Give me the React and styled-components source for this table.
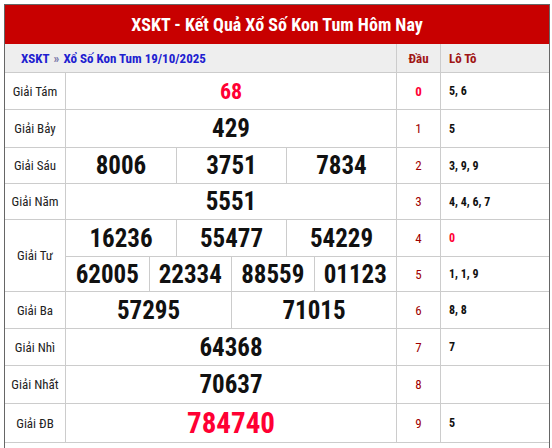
import React from 'react';
import styled, { createGlobalStyle } from "styled-components";

const GlobalStyle = createGlobalStyle`
  body {
    margin: 0;
    background: #fff;
    font-family: Roboto, "Liberation Sans", sans-serif;
  }
`;

const Board = styled.div`
  margin: 4px 0 0 4px;
  width: 546px;
  box-sizing: border-box;
  border: 1px solid #666;
  border-bottom: none;
  font-stretch: 75%;
`;

const Title = styled.h1`
  margin: 0;
  height: 39px;
  background: #c80000;
  color: #fff;
  font-size: 18px;
  font-weight: 700;
  display: flex;
  align-items: center;
  justify-content: center;
`;

const Grid = styled.div`
  display: grid;
  grid-template-columns: 61px 331px 44px 108px;
`;

const HeadCell = styled.div`
  height: 28px;
  background: #eee;
  border-bottom: 1px solid #ccc;
  border-right: ${({ last }) => (last ? "none" : "1px solid #ccc")};
  display: flex;
  align-items: center;
  justify-content: ${({ left }) => (left ? "flex-start" : "center")};
  padding-left: ${({ pad }) => pad || 0}px;
  grid-column: ${({ span }) => span || "auto"};
  font-size: 13px;
  font-weight: 700;
  color: #a01515;
`;

const Crumb = styled.span`
  color: #2020d0;
`;

const Sep = styled.span`
  color: #7a7aa8;
  margin: 0 4px;
`;

const Label = styled.div`
  grid-row: span ${({ rows }) => rows || 1};
  border-right: 1px solid #ccc;
  border-bottom: 1px solid #ccc;
  display: flex;
  align-items: center;
  justify-content: center;
  font-size: 13px;
  color: #222;
`;

const Numbers = styled.div`
  display: grid;
  grid-template-columns: repeat(${({ cols }) => cols}, 1fr);
  height: ${({ h }) => h}px;
  border-right: 1px solid #ccc;
  border-bottom: 1px solid #ccc;
`;

const Num = styled.div`
  display: flex;
  align-items: center;
  justify-content: center;
  border-left: 1px solid #ccc;
  &:first-child {
    border-left: none;
  }
  font-size: ${({ size }) => size || 25}px;
  font-weight: 700;
  color: ${({ red }) => (red ? "#ff0033" : "#111")};
`;

const Dau = styled.div`
  border-right: 1px solid #ccc;
  border-bottom: 1px solid #ccc;
  display: flex;
  align-items: center;
  justify-content: center;
  font-size: 13px;
  font-weight: ${({ hot }) => (hot ? 700 : 400)};
  color: ${({ hot }) => (hot ? "#ff0033" : "#a00000")};
`;

const Loto = styled.div`
  border-bottom: 1px solid #ccc;
  display: flex;
  align-items: center;
  padding-left: 8px;
  font-size: 12px;
  font-weight: 700;
  color: ${({ hot }) => (hot ? "#ff0033" : "#111")};
`;

const Tail = styled.div`
  height: 12px;
`;

const prizes = [
  { label: "Giải Tám", rows: [{ nums: ["68"], h: 36, red: true, size: 22 }] },
  { label: "Giải Bảy", rows: [{ nums: ["429"], h: 37 }] },
  { label: "Giải Sáu", rows: [{ nums: ["8006", "3751", "7834"], h: 35 }] },
  { label: "Giải Năm", rows: [{ nums: ["5551"], h: 35 }] },
  {
    label: "Giải Tư",
    rows: [
      { nums: ["16236", "55477", "54229"], h: 36 },
      { nums: ["62005", "22334", "88559", "01123"], h: 34 },
    ],
  },
  { label: "Giải Ba", rows: [{ nums: ["57295", "71015"], h: 36 }] },
  { label: "Giải Nhì", rows: [{ nums: ["64368"], h: 36 }] },
  { label: "Giải Nhất", rows: [{ nums: ["70637"], h: 37 }] },
  { label: "Giải ĐB", rows: [{ nums: ["784740"], h: 38, red: true, size: 29 }] },
];

const loto = ["5, 6", "5", "3, 9, 9", "4, 4, 6, 7", "0", "1, 1, 9", "8, 8", "7", "", "5"];

const App = () => {
  let idx = 0;
  return (
    <>
      <GlobalStyle />
      <Board>
        <Title>XSKT - Kết Quả Xổ Số Kon Tum Hôm Nay</Title>
        <Grid>
          <HeadCell span="span 2" left pad={16}>
            <Crumb>XSKT</Crumb>
            <Sep>»</Sep>
            <Crumb>Xổ Số Kon Tum 19/10/2025</Crumb>
          </HeadCell>
          <HeadCell>Đầu</HeadCell>
          <HeadCell last left pad={8}>Lô Tô</HeadCell>
          {prizes.map((p) => (
            <React.Fragment key={p.label}>
              <Label rows={p.rows.length}>{p.label}</Label>
              {p.rows.map((r, ri) => {
                const d = idx++;
                return (
                  <React.Fragment key={ri}>
                    {ri > 0 && null}
                    <Numbers cols={r.nums.length} h={r.h}>
                      {r.nums.map((n) => (
                        <Num key={n} red={r.red} size={r.size}>{n}</Num>
                      ))}
                    </Numbers>
                    <Dau hot={d === 0}>{d}</Dau>
                    <Loto hot={loto[d] === "0"}>{loto[d]}</Loto>
                  </React.Fragment>
                );
              })}
            </React.Fragment>
          ))}
        </Grid>
        <Tail />
      </Board>
    </>
  );
};

export default App;
